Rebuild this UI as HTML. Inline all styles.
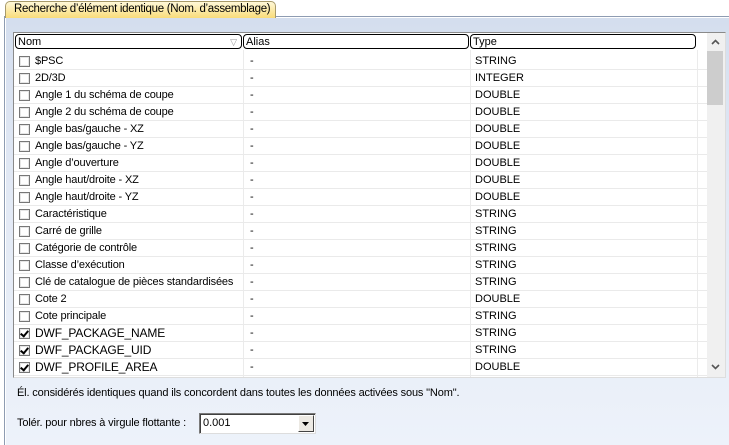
<!DOCTYPE html>
<html><head><style>
*{margin:0;padding:0;box-sizing:border-box}
body{width:729px;height:445px;overflow:hidden;font-family:"Liberation Sans",sans-serif;font-size:11px;color:#000;background:#fff;position:relative}
.abs{position:absolute}
#panel{left:4px;top:16px;width:725px;height:429px;background:linear-gradient(#d4deee,#e2e9f5 40%,#edf2fa);border-left:1px solid #8e9cb2;border-top:1px solid #8e9cb2;box-shadow:inset 1px 1px 0 #fff}
#tab{left:5px;top:1px;width:271px;height:17px;background:linear-gradient(#fff8d8,#f9dc7a);border:1px solid #a89a6a;border-bottom:none;border-radius:5px 5px 0 0;font-size:11.5px;padding:1px 0 0 8px;letter-spacing:-0.3px;white-space:nowrap;overflow:hidden}
#list{left:13px;top:32px;width:713px;height:346px;background:#fff;border:1px solid #8a8a8a;border-right-color:#ddd;border-bottom-color:#ddd;overflow:hidden}
.hd{position:absolute;top:1px;height:15px;border:1px solid #000;border-radius:4px;padding-left:2px;font-size:11px;line-height:14px;background:#fff}
.row{position:absolute;left:0;width:694px;height:17px;border-bottom:1px solid #eaeaea}
.cb{position:absolute;left:5px;top:3px;width:11px;height:11px;border:1px solid #777;background:#fff;box-shadow:inset 0 0 0 1px #e6e6e6}
.cb.on::after{content:"";position:absolute;left:2px;top:0px;width:3px;height:6px;border:solid #000;border-width:0 2px 2px 0;transform:rotate(40deg)}
.t1{position:absolute;left:21px;top:2px;white-space:nowrap;letter-spacing:-0.15px}
.t2{position:absolute;left:236px;top:2px}
.t3{position:absolute;left:461px;top:2px}
.vl{position:absolute;top:17px;width:1px;height:330px;background:#ebebeb}
#sb{left:693px;top:0px;width:18px;height:344px;background:#f0f0f0}
</style></head><body>
<div id="panel" class="abs"></div>
<div id="tab" class="abs">Recherche d’élément identique (Nom. d’assemblage)</div>
<div id="list" class="abs">
<div class="hd" style="left:1px;width:227px">Nom<span style="position:absolute;right:4px;top:0;color:#999;font-size:9px">▽</span></div>
<div class="hd" style="left:229px;width:226px">Alias</div>
<div class="hd" style="left:456px;width:226px">Type</div>
<div class="vl" style="left:229px"></div>
<div class="vl" style="left:456px"></div>
<div class="vl" style="left:683px"></div>
<div style="position:absolute;top:20px;left:0">
<div class="row" style="top:0"><div class="cb"></div><span class="t1">$PSC</span><span class="t2">-</span><span class="t3">STRING</span></div>
<div class="row" style="top:17px"><div class="cb"></div><span class="t1">2D/3D</span><span class="t2">-</span><span class="t3">INTEGER</span></div>
<div class="row" style="top:34px"><div class="cb"></div><span class="t1">Angle 1 du schéma de coupe</span><span class="t2">-</span><span class="t3">DOUBLE</span></div>
<div class="row" style="top:51px"><div class="cb"></div><span class="t1">Angle 2 du schéma de coupe</span><span class="t2">-</span><span class="t3">DOUBLE</span></div>
<div class="row" style="top:68px"><div class="cb"></div><span class="t1">Angle bas/gauche - XZ</span><span class="t2">-</span><span class="t3">DOUBLE</span></div>
<div class="row" style="top:85px"><div class="cb"></div><span class="t1">Angle bas/gauche - YZ</span><span class="t2">-</span><span class="t3">DOUBLE</span></div>
<div class="row" style="top:102px"><div class="cb"></div><span class="t1">Angle d’ouverture</span><span class="t2">-</span><span class="t3">DOUBLE</span></div>
<div class="row" style="top:119px"><div class="cb"></div><span class="t1">Angle haut/droite - XZ</span><span class="t2">-</span><span class="t3">DOUBLE</span></div>
<div class="row" style="top:136px"><div class="cb"></div><span class="t1">Angle haut/droite - YZ</span><span class="t2">-</span><span class="t3">DOUBLE</span></div>
<div class="row" style="top:153px"><div class="cb"></div><span class="t1">Caractéristique</span><span class="t2">-</span><span class="t3">STRING</span></div>
<div class="row" style="top:170px"><div class="cb"></div><span class="t1">Carré de grille</span><span class="t2">-</span><span class="t3">STRING</span></div>
<div class="row" style="top:187px"><div class="cb"></div><span class="t1">Catégorie de contrôle</span><span class="t2">-</span><span class="t3">STRING</span></div>
<div class="row" style="top:204px"><div class="cb"></div><span class="t1">Classe d’exécution</span><span class="t2">-</span><span class="t3">STRING</span></div>
<div class="row" style="top:221px"><div class="cb"></div><span class="t1">Clé de catalogue de pièces standardisées</span><span class="t2">-</span><span class="t3">STRING</span></div>
<div class="row" style="top:238px"><div class="cb"></div><span class="t1">Cote 2</span><span class="t2">-</span><span class="t3">DOUBLE</span></div>
<div class="row" style="top:255px"><div class="cb"></div><span class="t1">Cote principale</span><span class="t2">-</span><span class="t3">STRING</span></div>
<div class="row" style="top:272px"><div class="cb on"></div><span class="t1" style="font-size:12px;top:1px">DWF_PACKAGE_NAME</span><span class="t2">-</span><span class="t3">STRING</span></div>
<div class="row" style="top:289px"><div class="cb on"></div><span class="t1" style="font-size:12px;top:1px">DWF_PACKAGE_UID</span><span class="t2">-</span><span class="t3">STRING</span></div>
<div class="row" style="top:306px"><div class="cb on"></div><span class="t1" style="font-size:12px;top:1px">DWF_PROFILE_AREA</span><span class="t2">-</span><span class="t3">DOUBLE</span></div>
<div class="row" style="top:323px"></div>
</div>
<div id="sb" class="abs">
<div style="position:absolute;left:0;top:18px;width:16px;height:54px;background:#cdcdcd"></div>
<svg style="position:absolute;left:4px;top:6px" width="9" height="6"><path d="M1 5L4.5 1.5L8 5" stroke="#555" stroke-width="1.6" fill="none"/></svg>
<svg style="position:absolute;left:4px;top:331px" width="9" height="6"><path d="M1 1L4.5 4.5L8 1" stroke="#555" stroke-width="1.6" fill="none"/></svg>
</div>
</div>
<div class="abs" style="left:17px;top:387px;font-size:11px;letter-spacing:-0.15px">Él. considérés identiques quand ils concordent dans toutes les données activées sous "Nom".</div>
<div class="abs" style="left:17px;top:417px;font-size:11px;letter-spacing:-0.15px">Tolér. pour nbres à virgule flottante :</div>
<div class="abs" style="left:199px;top:413px;width:117px;height:21px;background:#fff;border:1px solid #7a7a7a;border-right-color:#ddd;border-bottom-color:#ddd;box-shadow:inset 1px 1px 0 #404040">
<span style="position:absolute;left:3px;top:3px">0.001</span>
<div style="position:absolute;right:1px;top:1px;width:16px;height:17px;background:#ece9e3;border:1px solid #fff;border-right-color:#444;border-bottom-color:#444"></div>
<svg style="position:absolute;right:5px;top:8px" width="8" height="5"><path d="M0 0H7L3.5 4Z" fill="#000"/></svg>
</div>
</body></html>
